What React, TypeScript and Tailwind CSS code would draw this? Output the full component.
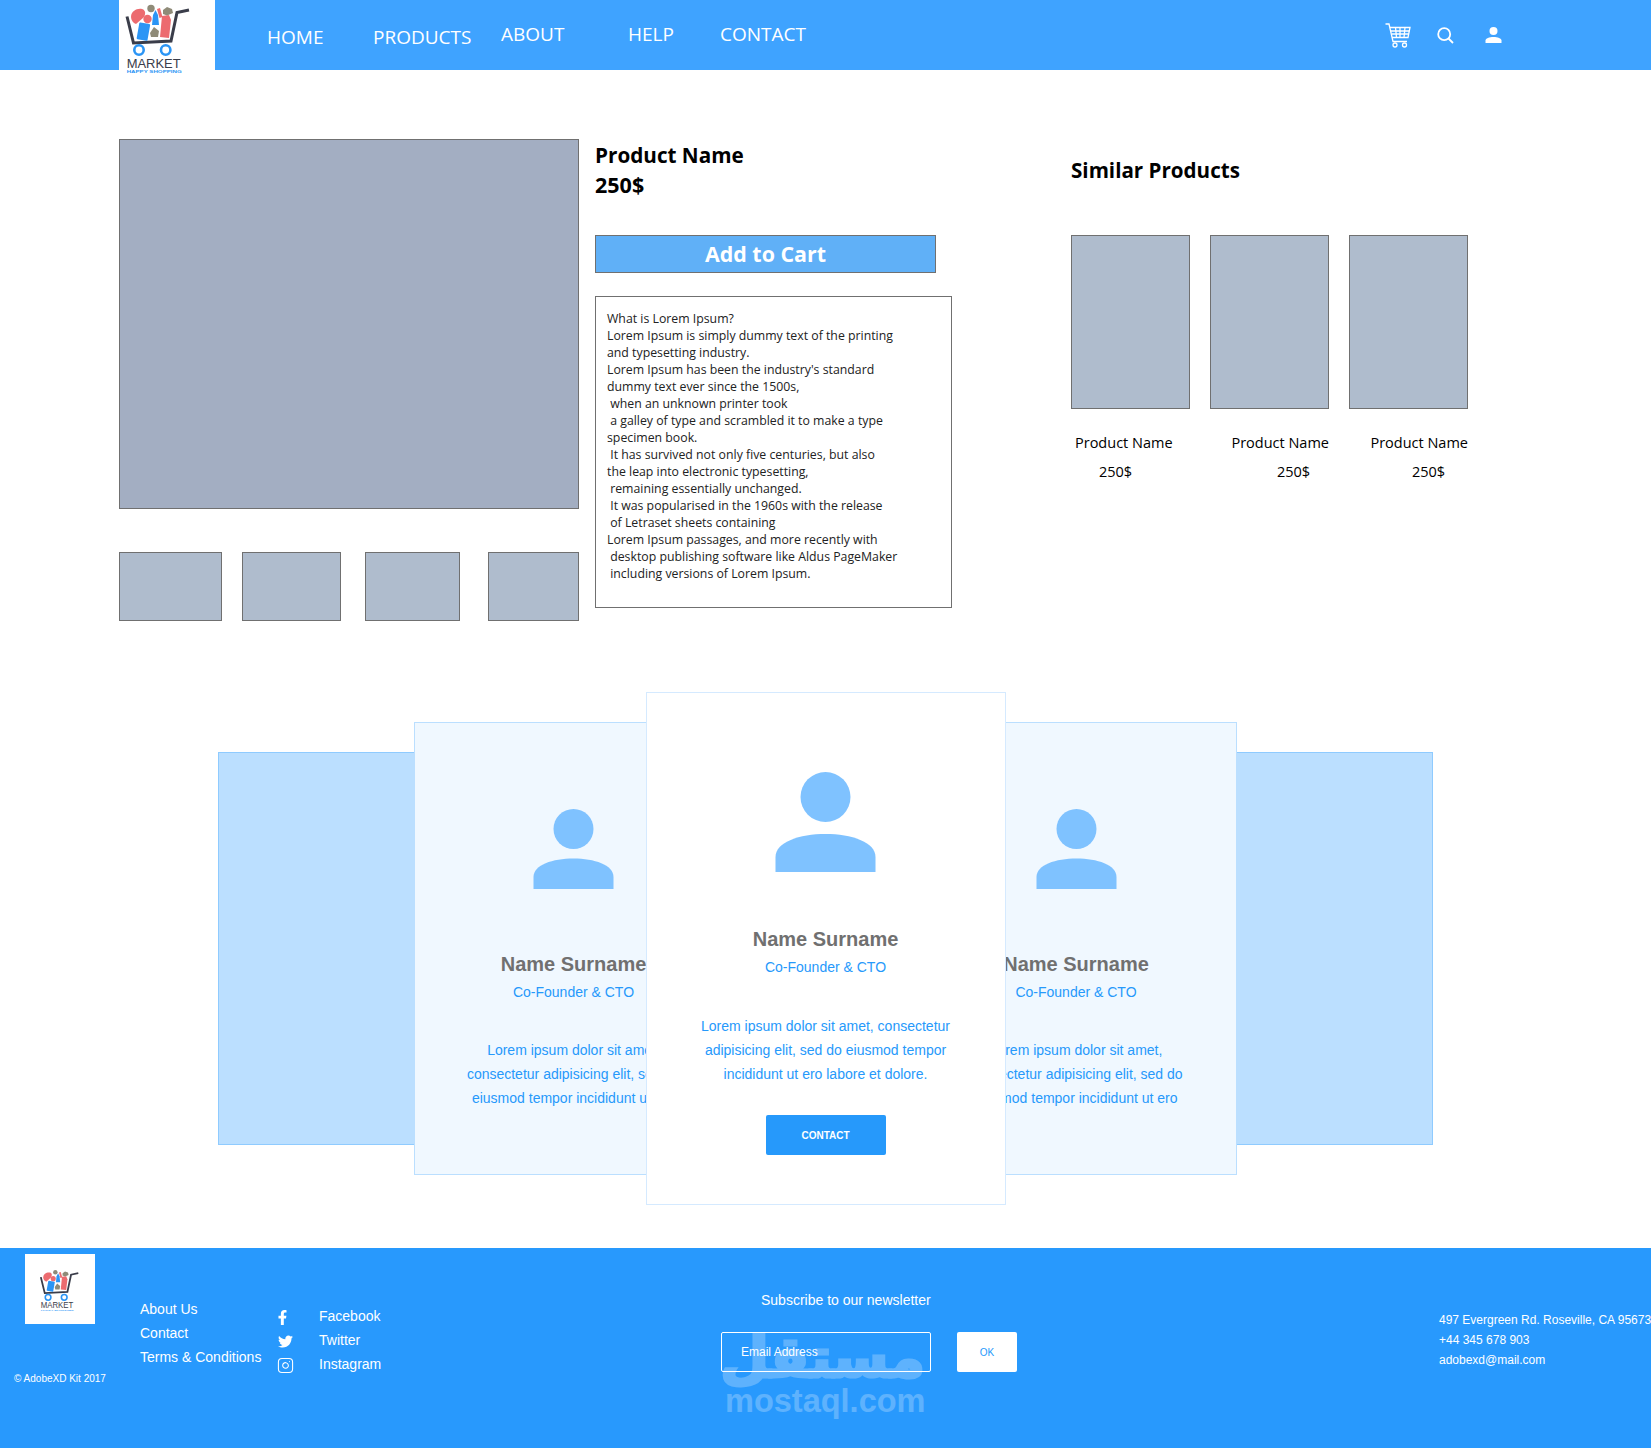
import { FaFacebookF, FaTwitter } from 'react-icons/fa';
import { Instagram } from 'lucide-react';

const uiFont = "font-['Open_Sans','Noto_Sans',sans-serif]";
const arial = "font-['Liberation_Sans',Arial,sans-serif]";

const descLines = [
  'What is Lorem Ipsum?',
  'Lorem Ipsum is simply dummy text of the printing',
  'and typesetting industry.',
  "Lorem Ipsum has been the industry's standard",
  'dummy text ever since the 1500s,',
  ' when an unknown printer took',
  ' a galley of type and scrambled it to make a type',
  'specimen book.',
  ' It has survived not only five centuries, but also',
  'the leap into electronic typesetting,',
  ' remaining essentially unchanged.',
  ' It was popularised in the 1960s with the release',
  ' of Letraset sheets containing',
  'Lorem Ipsum passages, and more recently with',
  ' desktop publishing software like Aldus PageMaker',
  ' including versions of Lorem Ipsum.',
];

// logo drawn by hand, 96x74 box
function Logo({ className }: { className?: string }) {
  return (
    <svg viewBox="0 0 96 74" className={className}>
      <path d="M8 16.5 L14.5 43 L52 41 L58 12.5 L70 10" fill="none" stroke="#3a3d4a" strokeWidth="3" />
      <path d="M12 17 C12 11 18 8 23 9 C27 10 27 15 24 18 L17 24 C14 23 12 20 12 17 Z" fill="#ec6b6f" />
      <circle cx="28.5" cy="19" r="4.2" fill="#ec6b6f" />
      <rect x="19" y="23" width="11" height="17" rx="1" transform="rotate(10 24 31)" fill="#2b95f5" />
      <path d="M34 15 L36.5 10 L39 15 L40 25 L33 25 Z" fill="#2b95f5" />
      <path d="M38 9 L41 8 L43.5 17 L40.5 18 Z" fill="#ec6b6f" />
      <path d="M43 16 L50 15 L52 20 L50 38 L41 37 Z" fill="#ec6b6f" />
      <circle cx="32" cy="8.5" r="3.7" fill="#8f8b78" />
      <path d="M44 10 L48 7 L53 9 L54 13 L48 15.5 L44 14 Z" fill="#8f8b78" />
      <path d="M31 33 L35 27 L40 31 L39 37 L32 37 Z" fill="#8f8b78" />
      <circle cx="20" cy="50" r="4.7" fill="#fff" stroke="#2b95f5" strokeWidth="2.6" />
      <circle cx="46.7" cy="50" r="4.7" fill="#fff" stroke="#2b95f5" strokeWidth="2.6" />
      <text x="7.7" y="68" fontFamily="Liberation Sans, sans-serif" fontSize="13.5" textLength="54" lengthAdjust="spacingAndGlyphs" fill="#3a3d4a">
        MARKET
      </text>
      <text x="7.7" y="73" fontFamily="Liberation Sans, sans-serif" fontSize="4" fontWeight="700" textLength="55" lengthAdjust="spacingAndGlyphs" fill="#2b95f5">
        HAPPY SHOPPING
      </text>
    </svg>
  );
}

function CartIcon() {
  return (
    <svg viewBox="0 0 26 25" className="w-[26px] h-[25px]" fill="none" stroke="#fff" strokeWidth="1.3">
      <path d="M0.5 1 H4 L8 18.5 H22" />
      <path d="M5 4.5 H25 L23 14.5 H7" />
      <path d="M6 8 H24.3 M7 11 H23.7 M10.5 4.5 L11.5 14.5 M15 4.5 V14.5 M20 4.5 L19 14.5" />
      <circle cx="10" cy="22" r="2" />
      <circle cx="19.5" cy="22" r="2" />
    </svg>
  );
}

function SearchIcon() {
  return (
    <svg viewBox="0 0 17 17" className="w-[17px] h-[17px]" fill="none" stroke="#fff" strokeWidth="1.8">
      <circle cx="7.2" cy="7.2" r="6" />
      <path d="M11.5 11.5 L16 16" />
    </svg>
  );
}

function Person({ className, fill }: { className: string; fill: string }) {
  return (
    <svg viewBox="0 0 100 100" className={className} fill={fill}>
      <ellipse cx="50" cy="25" rx="25" ry="25" />
      <path d="M0 100 V85 C0 70 24 62 50 62 C76 62 100 70 100 85 V100 Z" />
    </svg>
  );
}

function MemberBody({ lines, textClass }: { lines: string[]; textClass: string }) {
  return (
    <>
      <h3 className={`${arial} text-[20px] leading-[24px] font-bold text-[#707070]`}>Name Surname</h3>
      <div className={`${arial} text-[14px] leading-[18px] text-[#2699fb] mt-[7px]`}>Co-Founder &amp; CTO</div>
      <div className={`${arial} text-[14px] leading-[24px] text-[#2699fb] ${textClass}`}>
        {lines.map((l) => (
          <div key={l}>{l}</div>
        ))}
      </div>
    </>
  );
}

function SideMember({ width }: { width: string }) {
  return (
    <div className={`${width} shrink-0 flex flex-col items-center text-center pt-[86px] whitespace-nowrap`}>
      <Person className="w-[81px] h-[80px] mb-[63px]" fill="#7fc2ff" />
      <MemberBody
        textClass="mt-[37px]"
        lines={[
          'Lorem ipsum dolor sit amet,',
          'consectetur adipisicing elit, sed do',
          'eiusmod tempor incididunt ut ero',
        ]}
      />
    </div>
  );
}

function SimilarCard({ cardClass, nameClass, priceClass }: { cardClass: string; nameClass: string; priceClass: string }) {
  return (
    <div className={`w-[119px] flex flex-col ${cardClass}`}>
      <div className="w-[119px] h-[174px] bg-[#afbccd] border border-[#707070]" />
      <div className={`${uiFont} text-[14.5px] leading-[20px] text-black mt-[24px] whitespace-nowrap ${nameClass}`}>
        Product Name
      </div>
      <div className={`${uiFont} text-[14.5px] leading-[20px] text-black mt-[9px] whitespace-nowrap ${priceClass}`}>250$</div>
    </div>
  );
}

export default function App() {
  return (
    <div className="w-[1651px] bg-white overflow-hidden">
      {/* header */}
      <header className={`${uiFont} h-[70px] bg-[#3fa3ff] flex text-white text-[19px] relative`}>
        <div className="ml-[119px] w-[96px] h-[72px] bg-white shrink-0 z-10">
          <Logo className="w-[96px] h-[74px]" />
        </div>
        <a className="ml-[52px] w-[106px] mt-[23px] leading-[28px]">HOME</a>
        <a className="w-[128px] mt-[23px] leading-[28px]">PRODUCTS</a>
        <a className="w-[127px] mt-[20px] leading-[28px]">ABOUT</a>
        <a className="w-[92px] mt-[20px] leading-[28px]">HELP</a>
        <a className="mt-[20px] leading-[28px]">CONTACT</a>
        <div className="absolute left-[1385px] top-[23px]">
          <CartIcon />
        </div>
        <div className="absolute left-[1437px] top-[27px]">
          <SearchIcon />
        </div>
        <div className="absolute left-[1485px] top-[27px]">
          <Person className="w-[17px] h-[16px]" fill="#fff" />
        </div>
      </header>

      {/* product */}
      <section className="flex pl-[119px] pt-[69px]">
        <div className="w-[460px] shrink-0">
          <div className="h-[370px] bg-[#a3aec2] border border-[#707070]" />
          <div className="flex mt-[43px]">
            <div className="w-[103px] h-[69px] bg-[#afbccd] border border-[#707070]" />
            <div className="w-[99px] h-[69px] bg-[#afbccd] border border-[#707070] ml-[20px]" />
            <div className="w-[95px] h-[69px] bg-[#afbccd] border border-[#707070] ml-[24px]" />
            <div className="w-[91px] h-[69px] bg-[#afbccd] border border-[#707070] ml-[28px]" />
          </div>
        </div>
        <div className={`${uiFont} w-[357px] ml-[16px] shrink-0`}>
          <div className="text-[20.7px] leading-[30px] font-bold text-black mt-[1px]">Product Name</div>
          <div className="text-[21.5px] leading-[29px] font-bold text-black">250$</div>
          <button className="block w-[341px] h-[38px] mt-[36px] bg-[#60b0f7] border border-[#707070] text-white text-[21.4px] font-bold leading-[34px]">
            Add to Cart
          </button>
          <div className="h-[312px] mt-[23px] border border-[#707070] pl-[11px] pt-[13px] text-[12.3px] leading-[17px] text-[#222] whitespace-pre">
            {descLines.map((line) => (
              <div key={line}>{line}</div>
            ))}
          </div>
        </div>
        <div className={`${uiFont} ml-[119px] shrink-0`}>
          <div className="text-[20.6px] leading-[30px] font-bold text-black mt-[16px]">Similar Products</div>
          <div className="flex mt-[50px]">
            <SimilarCard cardClass="" nameClass="ml-[4px]" priceClass="ml-[28px]" />
            <SimilarCard cardClass="ml-[20px]" nameClass="text-right" priceClass="ml-[67px]" />
            <SimilarCard cardClass="ml-[20px]" nameClass="text-right" priceClass="ml-[63px]" />
          </div>
        </div>
      </section>

      {/* team */}
      <section className="mt-[131px] mb-[103px] flex justify-center">
        <div className="w-[1215px] h-[393px] bg-[#bbdfff] border border-[#8fcbff] flex items-center justify-center">
          <div className="w-[823px] h-[453px] shrink-0 bg-[#f0f8ff] border border-[#bbdfff] flex items-center">
            <div className="w-[231px] h-full shrink-0 overflow-hidden">
              <SideMember width="w-[317px]" />
            </div>
            <div className="w-[360px] h-[513px] shrink-0 bg-white border border-[#d5eaff] flex flex-col items-center text-center pt-[79px] pr-[1px] whitespace-nowrap">
              <Person className="w-[101px] h-[100px] mb-[55px]" fill="#7fc2ff" />
              <MemberBody
                textClass="mt-[38px]"
                lines={[
                  'Lorem ipsum dolor sit amet, consectetur',
                  'adipisicing elit, sed do eiusmod tempor',
                  'incididunt ut ero labore et dolore.',
                ]}
              />
              <button className={`${arial} w-[120px] h-[40px] mt-[29px] bg-[#2699fb] rounded-[2px] text-white text-[10px] font-bold`}>
                CONTACT
              </button>
            </div>
            <div className="w-[230px] h-full shrink-0 overflow-hidden flex justify-end">
              <SideMember width="w-[320px]" />
            </div>
          </div>
        </div>
      </section>

      {/* footer */}
      <footer className={`${arial} relative h-[200px] bg-[#2899fd] text-white flex overflow-hidden`}>
        <div className="w-[140px] shrink-0 pt-[6px]">
          <div className="ml-[25px] w-[70px] h-[70px] bg-white flex items-center justify-center">
            <Logo className="w-[58px] h-[45px] ml-[10px]" />
          </div>
          <div className="ml-[14px] mt-[49px] text-[10px] leading-[12px] whitespace-nowrap">© AdobeXD Kit 2017</div>
        </div>
        <div className="w-[138px] shrink-0 pt-[49px] text-[14px] leading-[24px] whitespace-nowrap">
          <div>About Us</div>
          <div>Contact</div>
          <div>Terms &amp; Conditions</div>
        </div>
        <div className="w-[443px] shrink-0 pt-[56px] flex text-[14px] leading-[24px]">
          <div className="w-[41px] flex flex-col items-start">
            <div className="h-[24px] flex items-center pt-[2px] -ml-[3px]"><FaFacebookF size={15} /></div>
            <div className="h-[24px] flex items-center pt-[2px]"><FaTwitter size={15} /></div>
            <div className="h-[24px] flex items-center pt-[2px] -ml-[1px]"><Instagram size={17} strokeWidth={1.5} /></div>
          </div>
          <div>
            <div>Facebook</div>
            <div>Twitter</div>
            <div>Instagram</div>
          </div>
        </div>
        <div className="w-[296px] shrink-0 pt-[43px]">
          <div className="ml-[40px] text-[14px] leading-[18px] whitespace-nowrap">Subscribe to our newsletter</div>
          <div className="flex mt-[23px]">
            <div className="w-[210px] h-[40px] border border-white rounded-[2px] pl-[19px] text-[12px] leading-[38px]">
              Email Address
            </div>
            <button className="w-[60px] h-[40px] ml-[26px] bg-white rounded-[2px] text-[#2699fb] text-[10px]">OK</button>
          </div>
        </div>
        <div className="ml-[422px] pt-[62px] text-[12px] leading-[20px] whitespace-nowrap">
          <div>497 Evergreen Rd. Roseville, CA 95673</div>
          <div>+44 345 678 903</div>
          <div>adobexd@mail.com</div>
        </div>
        {/* watermark */}
        <div className="absolute left-[725px] top-[70px] w-[200px] text-center text-white opacity-25 pointer-events-none">
          <div dir="rtl" className="font-['DejaVu_Sans',sans-serif] font-bold text-[56px] leading-[65px] pt-[7px] -mb-[7px] [-webkit-text-stroke:3px_white] whitespace-nowrap">مستقل</div>
          <div className="font-bold text-[32.5px] leading-[36px] whitespace-nowrap">mostaql.com</div>
        </div>
      </footer>
    </div>
  );
}
